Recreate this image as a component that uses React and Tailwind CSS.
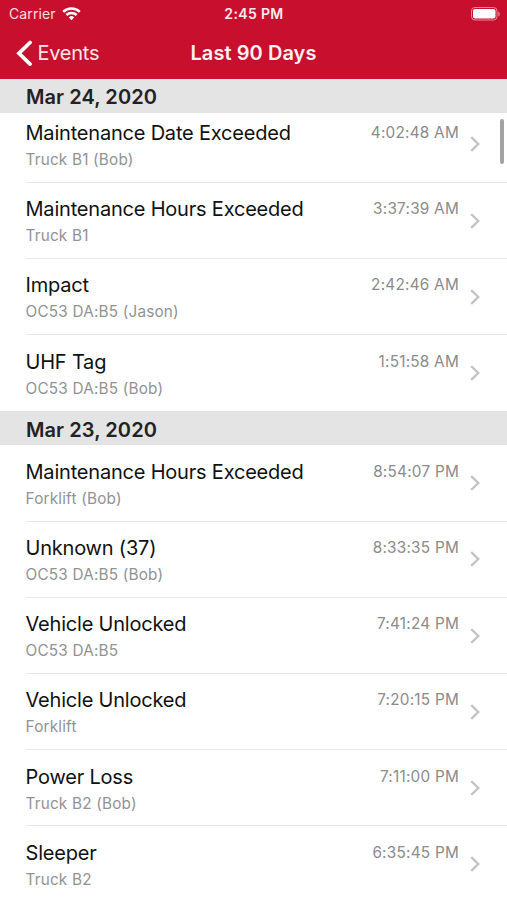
import React from "react";

const sections = [
  {
    date: "Mar 24, 2020",
    rows: [
      ["Maintenance Date Exceeded", "Truck B1 (Bob)", "4:02:48 AM"],
      ["Maintenance Hours Exceeded", "Truck B1", "3:37:39 AM"],
      ["Impact", "OC53 DA:B5 (Jason)", "2:42:46 AM"],
      ["UHF Tag", "OC53 DA:B5 (Bob)", "1:51:58 AM"],
    ],
  },
  {
    date: "Mar 23, 2020",
    rows: [
      ["Maintenance Hours Exceeded", "Forklift (Bob)", "8:54:07 PM"],
      ["Unknown (37)", "OC53 DA:B5 (Bob)", "8:33:35 PM"],
      ["Vehicle Unlocked", "OC53 DA:B5", "7:41:24 PM"],
      ["Vehicle Unlocked", "Forklift", "7:20:15 PM"],
      ["Power Loss", "Truck B2 (Bob)", "7:11:00 PM"],
      ["Sleeper", "Truck B2", "6:35:45 PM"],
    ],
  },
];

function Row({ row, tucked, last }) {
  const [title, vehicle, time] = row;
  return (
    <li className={`flex pl-[26px] ${tucked ? "h-[69.8px]" : "h-[76.2px]"}`}>
      <div className={`flex grow items-end ${last ? "" : "border-b border-[#e8e8e9]"}`}>
        <div className={`flex w-full ${last ? "h-[76.2px]" : "h-[75.2px]"} shrink-0 pt-[13.4px]`}>
          <div className="grow whitespace-nowrap">
            <div className="-ml-[0.5px] text-[20px] leading-[27px] tracking-[-0.2px] text-[#111]">{title}</div>
            <div className="-ml-[0.5px] text-[15.3px] leading-[26.4px] tracking-[0.2px] text-[#929294]">{vehicle}</div>
          </div>
          <div className="text-[15.3px] leading-[26.4px] tracking-[0.25px] text-[#8b8b8d] whitespace-nowrap">{time}</div>
          <svg className="ml-[11px] mr-[27px] mt-[16.4px] h-4 w-[10px] shrink-0" viewBox="0 0 10 16" fill="none" stroke="#c3c3c6" strokeWidth="2.3">
            <path d="M1.2 1.2 8.3 8 1.2 14.8" />
          </svg>
        </div>
      </div>
    </li>
  );
}

export default function App() {
  return (
    <div className="relative h-[900px] w-[507px] overflow-hidden bg-white font-['Inter','Liberation_Sans',sans-serif]">
      <header className="h-[79px] bg-[#c8102e] text-white">
        <div className="grid h-[27px] grid-cols-3 items-center pl-[9px] pr-[8px]">
          <div className="flex items-center gap-[6px] text-[14px] tracking-[0.12px] text-[#fbdde2]">
            <span>Carrier</span>
            <svg className="h-[14px] w-[19px]" viewBox="0 0 19 14" fill="none" stroke="white" strokeWidth="2.5">
              <path d="M1.2 4.8a11.8 11.8 0 0 1 16.6 0" />
              <path d="M4.4 8a7.2 7.2 0 0 1 10.2 0" />
              <path d="M6.8 10.4a3.8 3.8 0 0 1 5.4 0L9.5 13.2Z" fill="white" stroke="none" />
            </svg>
          </div>
          <div className="text-center text-[14px] font-semibold tracking-[0.35px] text-[#fdeaed]">2:45 PM</div>
          <svg className="-mr-[2px] h-[14px] w-[30px] justify-self-end" viewBox="0 0 30 14">
            <rect x=".5" y=".5" width="25.5" height="12.5" rx="3.5" fill="none" stroke="#e78a98" />
            <rect x="2" y="2" width="22.5" height="9.5" rx="2" fill="white" />
            <path d="M27.3 4.5v5c2-1 2-4 0-5Z" fill="#e78a98" />
          </svg>
        </div>
        <div className="grid h-[52px] grid-cols-[1fr_auto_1fr] items-center">
          <div className="flex items-center gap-[5px] pl-[16px] text-[20px] tracking-[-0.25px] text-[#fde6e9]">
            <svg className="h-[27px] w-[16.5px]" viewBox="0 0 17 27" fill="none" stroke="white" strokeWidth="3.8">
              <path d="M14.5 2.2 3 13.3 14.5 24.4" strokeLinecap="round" />
            </svg>
            <span>Events</span>
          </div>
          <h1 className="text-[20px] font-semibold tracking-[0.06px] text-[#fff0f2]">Last 90 Days</h1>
        </div>
      </header>
      <main>
        {sections.map((section, s) => (
          <section key={section.date}>
            <h2 className="flex h-[34px] items-center bg-[#e4e4e5] pl-[26px] pt-[2.4px] text-[20px] font-semibold tracking-[0.08px] text-[#222]">
              {section.date}
            </h2>
            <ul>
              {section.rows.map((row, i) => (
                <Row key={row[2]} row={row} tucked={s === 0 && i === 0} last={i === section.rows.length - 1} />
              ))}
            </ul>
          </section>
        ))}
      </main>
      <div className="absolute right-[3px] top-[119px] h-[45px] w-[4px] rounded-full bg-[#a3a3a5]" />
    </div>
  );
}
